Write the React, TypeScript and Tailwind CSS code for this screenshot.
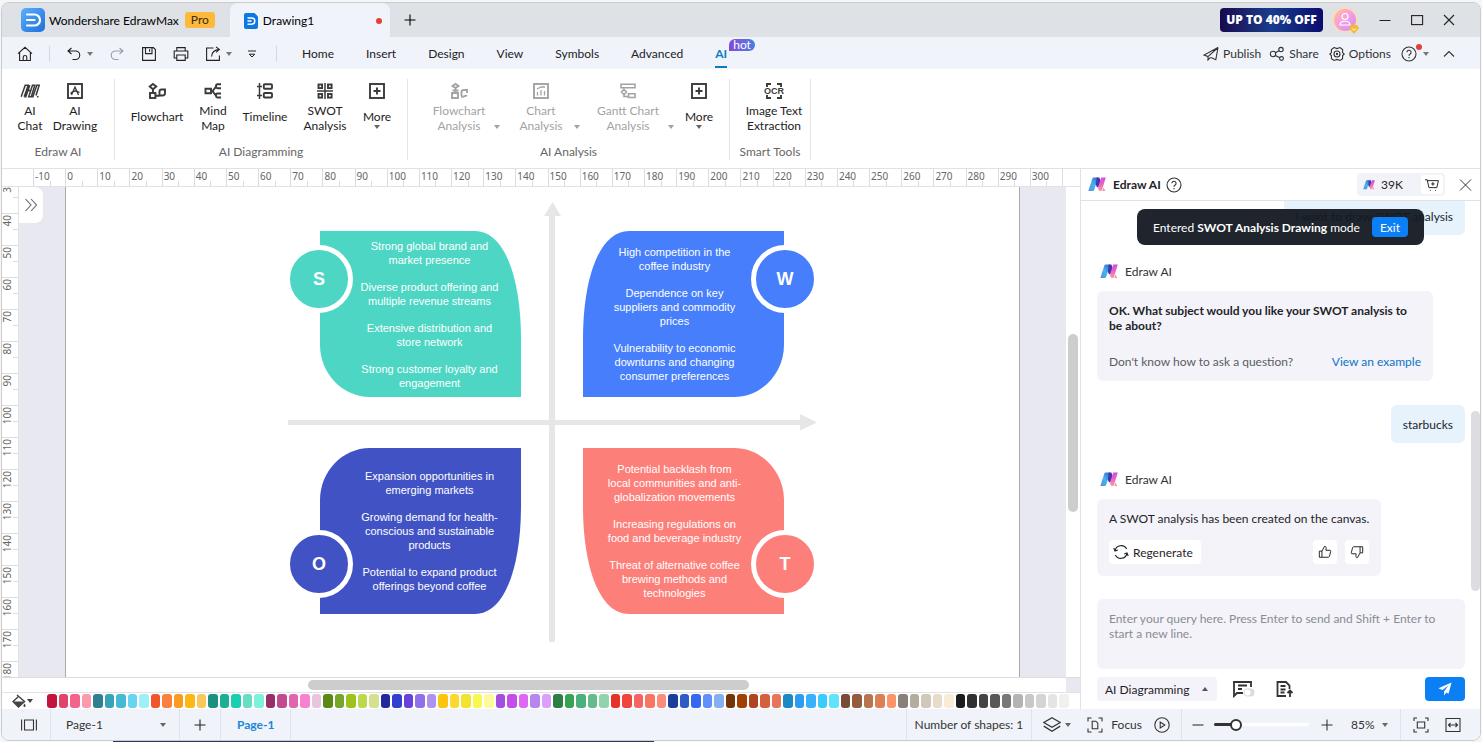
import { useState } from "react";
import type { ReactNode } from "react";
import clsx from "clsx";

interface IconProps {
  size?: string;
  stroke?: number;
  className?: string;
  children: ReactNode;
}

function Icon({ size = "w-4 h-4", stroke = 1.1, className, children }: IconProps) {
  return (
    <svg viewBox="0 0 16 16" className={clsx("shrink-0", size, className)} fill="none" stroke="currentColor" strokeWidth={stroke} aria-hidden="true">
      {children}
    </svg>
  );
}

function Caret({ up, className }: { up?: boolean; className?: string }) {
  return (
    <svg viewBox="0 0 6 4" className={clsx("w-[6px] h-[4px] shrink-0", className)} fill="currentColor" aria-hidden="true">
      <path d={up ? "M0 4L3 0l3 4z" : "M0 0h6L3 4z"} />
    </svg>
  );
}

function EdrawMark({ className }: { className?: string }) {
  return (
    <svg viewBox="0 0 18 15" className={clsx("shrink-0", className)} aria-hidden="true">
      <defs>
        <linearGradient id="markBlue" x1="0" y1="1" x2="1" y2="0">
          <stop offset="0" stopColor="#5a8fe4" />
          <stop offset=".5" stopColor="#45b4ee" />
          <stop offset="1" stopColor="#3a5ec8" />
        </linearGradient>
        <linearGradient id="markPink" x1="0" y1="0" x2="0" y2="1">
          <stop offset="0" stopColor="#d050e0" />
          <stop offset=".5" stopColor="#f062bc" />
          <stop offset="1" stopColor="#fb9aa8" />
        </linearGradient>
      </defs>
      <path d="M4.300 1.500Q4.700.500 5.700.500H10L6.200 13q-.4 1-1.400 1H.3z" fill="url(#markBlue)" />
      <path d="M8.800.500h2.600l1.600 4.500-3 5.500q-1.500 0-2.200-3z" fill="#4136b4" />
      <path d="M13.200.500h4.600l-2.600 8.500-1.200 4q-.3 1-1.300 1h-1.400q-1.600-2-1.100-4z" fill="url(#markPink)" />
      <path d="M15.600 10.500l1.600 3.500h-2.800z" fill="#f78bb0" />
    </svg>
  );
}

function AppLogo({ className }: { className?: string }) {
  return (
    <svg viewBox="0 0 24 24" className={clsx("shrink-0", className)} aria-hidden="true">
      <defs>
        <linearGradient id="appLogo" x1="0" y1="0" x2="1" y2="1">
          <stop offset="0" stopColor="#5cb0fc" />
          <stop offset="1" stopColor="#1c6fdc" />
        </linearGradient>
      </defs>
      <rect width="24" height="24" rx="5" fill="url(#appLogo)" />
      <path d="M6 6.500h7.500a5.500 5.500 0 0 1 0 11H6M6 12h7.500" fill="none" stroke="#fff" strokeWidth="2.200" strokeLinecap="round" />
    </svg>
  );
}

function FileLogo() {
  return (
    <svg viewBox="0 0 14 16" className="w-[14px] h-4 shrink-0" aria-hidden="true">
      <path d="M2 0h8.500L14 3.500V14a2 2 0 0 1-2 2H2a2 2 0 0 1-2-2V2a2 2 0 0 1 2-2z" fill="#0b78e3" />
      <path d="M3.500 5h4.200a3 3 0 0 1 0 6.200H3.500M3.500 8.100h4" fill="none" stroke="#fff" strokeWidth="1.500" />
    </svg>
  );
}

const icons = {
  home: <path d="M1 7.700L8 1.300l7 6.400M2.600 6.500v8h10.800v-8M6.200 14.500v-3.200a1.800 1.800 0 0 1 3.600 0v3.200" />,
  undo: <path d="M5.500 2L2 5l3.500 3M2 5h7.500a4.200 4.200 0 0 1 0 8.500H6.500" />,
  redo: <path d="M10.500 2L14 5l-3.500 3M14 5H6.500a4.200 4.200 0 0 0 0 8.500h3" />,
  save: <path d="M1.600 1.600h10.800l2 2v10.800H1.600zM4.500 1.600v6h6.500v-6M8.600 3.200v2.600" />,
  print: <path d="M3.800 5V1.600h8.400V5M3.800 12H1.200V5h13.600v7h-2.600M3.800 9h8.400v5.400H3.800z" />,
  exportFile: <path d="M8.500 2H1.600v12.400h12.800V9.500M11 .8l3.400 2.800L11 6.400M14.400 3.600C10 3.800 6.800 6 6.600 10.500" />,
  overflow: <path d="M4 5h8M5.200 8.200h5.600L8 11z" strokeWidth="1" />,
  publish: <path d="M15 1.500L1 9l4 1.600L15 1.500zM15 1.500l-2.200 12.300L8 11.500M5 10.600V14l2.600-2.700" />,
  share: (
    <>
      <circle cx="4" cy="8" r="2.700" />
      <circle cx="12" cy="3.600" r="2.200" />
      <circle cx="12.500" cy="12.500" r="1.900" />
      <path d="M6.400 6.700L10 4.700M6.300 9.400l4.600 2.400" />
    </>
  ),
  gear: (
    <>
      <path d="M5 1.600L8 2.600l3-1 2.600 2v3L15.200 8l-1.600 1.600v3L11 14.400l-3-1-3 1-2.600-1.800v-3L.8 8l1.600-1.400v-3z" />
      <circle cx="8" cy="8" r="3" />
      <circle cx="8" cy="8" r=".6" />
    </>
  ),
  help: (
    <>
      <circle cx="8" cy="8" r="7" />
      <path d="M5.900 6.300a2.100 2.100 0 1 1 3.100 1.900c-.7.400-1 .8-1 1.500M8 11v1.200" />
    </>
  ),
  chevronUp: <path d="M3 10.500l5-5 5 5" />,
  close: <path d="M3 2.500l11 11M14 2.500l-11 11" />,
  plus: <path d="M8 2.500v11M2.500 8h11" />,
  chat: (
    <path d="M-.8 13.800L3.200 2.200h3L2.200 13.800M2.200 13.800h1.600L7.800 2.200M3.800 13.800L6 7.500h3.500M9.300 13.800h-2.600L10.500 2.200h2.300zM9.300 13.800h1.600L14.800 2.200h2.400L14 12.500M15 13.800h1.500" strokeWidth="1.500" />
  ),
  drawing: (
    <>
      <rect x="1" y="1" width="14" height="14" />
      <path d="M4.500 12L8 4l3.500 8M3.500 10.500c3-3.500 6-3 9-1" strokeWidth="1.300" />
    </>
  ),
  flowchart: (
    <>
      <path d="M4 .900l3.300 2.700L4 6.300.7 3.600zM4 6.300V10M6.500 12.800h3.800" />
      <rect x="1" y="10" width="5.400" height="5" />
      <path d="M10.500 12.500V8.500q0-2 2-2h3.500v3.500q0 2.500-2.500 2.500z" />
    </>
  ),
  flowchartMuted: (
    <path d="M1.500 3L4.500.900l3 2.100-3 2.100zM4.500 5v5M1 10h6v5H1zM1.500 7.500h6M10.500 13.500V9q0-2 2.500-2h3v3M10.500 13.500c2 1.500 3.500-2 5.500-.5" />
  ),
  mindMap: (
    <path d="M.5 5.800h5.500v4.500H.5zM6 8.200h1.500L11 3.500M7.500 8.200L11 12.700M16 1.200h-3.500q-1.500 0-1.500 1.500v1q0 1.500 1.500 1.500H16M16 10.500h-3.500q-1.500 0-1.500 1.500v1q0 1.500 1.500 1.500H16" />
  ),
  timeline: (
    <>
      <path d="M2.500 0v16M0 3.500h5M0 12.500h5" strokeWidth="1.500" />
      <rect x="6.800" y="1.300" width="8.200" height="4.500" rx="1" />
      <rect x="6.800" y="10" width="8.200" height="4.500" rx="1" />
    </>
  ),
  swot: (
    <>
      <path d="M8 0v16M0 8h16" strokeWidth="1.500" />
      <rect x="1.500" y="1.500" width="3.600" height="3.600" />
      <rect x="11" y="1.500" width="3.600" height="3.600" />
      <rect x="1.500" y="11" width="3.600" height="3.600" />
      <rect x="11" y="11" width="3.600" height="3.600" />
    </>
  ),
  more: (
    <>
      <rect x="1" y="1" width="14" height="14" />
      <path d="M8 4.500v7M4.500 8h7" />
    </>
  ),
  chart: (
    <>
      <rect x="1" y="1" width="14" height="14" />
      <path d="M4.500 12.500V9M8 12.500V7M11.500 12.500V8M4 6l4-2 4 0" strokeWidth="1.300" />
    </>
  ),
  gantt: <path d="M1 1.200h14v3.600H1zM8.500 10.800h6.500v3.700H8.500zM4 6.500l2.500 2.500L4 11.500 1.500 9zM4 11.500v2h4" strokeWidth="1.600" />,
  ocr: (
    <>
      <path d="M1 4V1h4M11 1h4v3M15 12v3h-4M5 15H1v-3" />
      <text x="8" y="11.200" textAnchor="middle" fontSize="9" fontWeight="700" fill="currentColor" stroke="none" fontFamily="Liberation Sans, sans-serif">OCR</text>
    </>
  ),
  cart: (
    <>
      <path d="M.5 2h2l2 9h9l1.800-8H3M6 14.200h.1M12 14.200h.1" strokeLinecap="round" />
      <path d="M9 4.800v4M7 6.800h4" />
    </>
  ),
  refresh: <path d="M2 6.500A6.300 6.300 0 0 1 13.700 5M14 9.500A6.300 6.300 0 0 1 2.300 11M.8 4l1.200 3 2.800-1M15.200 12L14 9l-2.800 1" />,
  thumbUp: <path d="M1.500 7h3v7h-3zM4.500 7L7.500 1.500c2 0 2 1.500 1.500 4.500h5l.5 1.200-1.500 6-1 .8H4.500" />,
  thumbDown: <path d="M14.500 9h-3V2h3zM11.500 9l-3 5.500c-2 0-2-1.500-1.500-4.500H2l-.5-1.200 1.500-6 1-.8h7.500" />,
  focus: <path d="M4.500 1H1v3.500M11.500 1H15v3.500M4.500 15H1v-3.500M11.500 15H15v-3.500M5.200 4.200h3.600l2 2v5.600H5.200z" />,
  play: (
    <>
      <circle cx="8" cy="8" r="7.200" />
      <path d="M6.200 5v6l4.600-3z" />
    </>
  ),
  layers: <path d="M8 1.500l7.300 4.300L8 10.100.7 5.800zM.7 9L8 13.500 15.300 9" />,
  fit: <path d="M4 1H1v3M12 1h3v3M4 15H1v-3M12 15h3v-3M4.300 5h7.400v6H4.300z" />,
  fitWidth: <path d="M1 1.500h14v13H1zM3.500 8h9M5.500 6l-2 2 2 2M10.500 6l2 2-2 2" />,
  pages: <path d="M.6 2.500v11M15.400 2.500v11M3.500 3h9v10h-9z" />,
};

const palette = [
  "#c4143c", "#e04468", "#f2648c", "#fb9aac",
  "#2d7f91", "#35a3b8", "#45bbd3", "#66d5ef", "#9df0f8",
  "#f0562a", "#fb8040", "#fb9a20", "#fcb714", "#f8c85c",
  "#199080", "#1cae94", "#18cfb0", "#6adcc4", "#7df2da",
  "#982d68", "#c34a90", "#e263ae", "#f880d0", "#e8c4de",
  "#5a8a14", "#76a62a", "#9cc21c", "#bcd84c", "#d4e290",
  "#232a9c", "#323fd0", "#6840dc", "#9070e8", "#ae92ec",
  "#fcc40c", "#fcd830", "#f0e430", "#f8f850", "#fdfa9c",
  "#a050dc", "#c44ce8", "#dc68f4", "#b884f0", "#dca0fa",
  "#2c7e44", "#34a450", "#4cb07c", "#64bc8c", "#90d4ac",
  "#e43228", "#f0443c", "#f46464", "#fa7464", "#fc8c7c",
  "#1c3e98", "#2c5cc4", "#3468f0", "#6090fa", "#84b0f0",
  "#743408", "#a04004", "#b04420", "#d4603c", "#e8745c",
  "#1c88c4", "#2c9cf0", "#38b0fc", "#38ccfc", "#60e4fc",
  "#784c38", "#945c3c", "#b87450", "#dc8054", "#fc9468",
  "#888078", "#b4ac9c", "#d0c8b8", "#e8dcc8", "#f8ecd8",
  "#181c1c", "#303030", "#444444", "#585858", "#787878",
  "#b4b4b4", "#c8c8c8", "#d4d4d4", "#e4e4e4", "#f0f0f0",
];

function TitleBar() {
  return (
    <header className="flex h-[34px] shrink-0 items-center bg-[#dee1e5] text-black">
      <AppLogo className="ml-[19px] w-6 h-6" />
      <span className="ml-1 pt-px">Wondershare EdrawMax</span>
      <span className="ml-[6px] flex h-4 w-[30px] items-center justify-center rounded-[3px] bg-[#fdb93c] text-[#3a2a10]">Pro</span>
      <div className="ml-[15px] flex w-40 items-center self-stretch rounded-t-lg bg-[#f0f3fa] pl-[14px] pr-2 pt-px">
        <FileLogo />
        <span className="ml-[5px] flex-1">Drawing1</span>
        <span className="h-[6px] w-[6px] rounded-full bg-[#e2403c]" />
      </div>
      <button aria-label="New tab" className="ml-3 flex h-4 w-4 items-center justify-center">
        <Icon>{icons.plus}</Icon>
      </button>
      <div className="ml-auto flex items-center pr-[23px]">
        <button className="h-6 w-[103px] rounded bg-linear-to-r from-[#16094f] via-[#1b3c8c] to-[#0b0a6e] font-['Open_Sans',sans-serif] text-[12px] font-extrabold whitespace-nowrap text-white">
          UP TO 40% OFF
        </button>
        <button aria-label="Account" className="ml-2 h-7 w-7">
          <svg viewBox="0 0 28 28" className="h-7 w-7">
            <defs>
              <linearGradient id="avatar" x1="0" y1="0" x2="1" y2="1">
                <stop offset="0" stopColor="#ffc08a" />
                <stop offset=".45" stopColor="#f7a0e0" />
                <stop offset="1" stopColor="#c98cf5" />
              </linearGradient>
            </defs>
            <circle cx="14" cy="14" r="13" fill="#f8ddb8" />
            <circle cx="14" cy="14" r="11" fill="url(#avatar)" />
            <circle cx="14" cy="10.500" r="3" fill="none" stroke="#fff" strokeWidth="1.200" />
            <path d="M9 19c0-5 10-5 10 0z" fill="none" stroke="#fff" strokeWidth="1.200" />
            <path d="M20 19h6l2 3-5 6-5-6z" fill="#f5b82e" />
            <path d="M21 22.300l2 2.200 2-2.200" fill="none" stroke="#fff" />
          </svg>
        </button>
        <div className="ml-[18px] flex gap-4 text-[#222]">
          <button aria-label="Minimize"><Icon><path d="M2.500 8.500h11" /></Icon></button>
          <button aria-label="Maximize"><Icon><rect x="2.600" y="3.600" width="11" height="9" /></Icon></button>
          <button aria-label="Close"><Icon><path d="M3 3l10 10M13 3L3 13" /></Icon></button>
        </div>
      </div>
    </header>
  );
}

const menus = ["Home", "Insert", "Design", "View", "Symbols", "Advanced"];

function MenuBar() {
  return (
    <div className="flex h-8 shrink-0 items-center bg-[#f0f3fa] pt-px">
      <button aria-label="Home" className="ml-[15px]"><Icon>{icons.home}</Icon></button>
      <span className="ml-4 h-4 w-px bg-[#d3d7de]" />
      <button aria-label="Undo" className="ml-4"><Icon>{icons.undo}</Icon></button>
      <button aria-label="Undo history" className="ml-[5px] text-[#777]"><Caret /></button>
      <button aria-label="Redo" className="ml-4 text-[#9a9ea5]"><Icon>{icons.redo}</Icon></button>
      <button aria-label="Save" className="ml-4"><Icon>{icons.save}</Icon></button>
      <button aria-label="Print" className="ml-4"><Icon>{icons.print}</Icon></button>
      <button aria-label="Export" className="ml-4"><Icon>{icons.exportFile}</Icon></button>
      <button aria-label="Export options" className="ml-[5px] text-[#777]"><Caret /></button>
      <button aria-label="More commands" className="ml-3"><Icon>{icons.overflow}</Icon></button>
      <span className="ml-4 h-4 w-px bg-[#d3d7de]" />
      <nav className="ml-[25px] flex items-center gap-8 self-stretch">
        {menus.map((m) => (
          <button key={m}>{m}</button>
        ))}
        <button className="relative flex items-center self-stretch font-bold text-[#0b7bc4]">
          AI
          <span className="absolute inset-x-0 bottom-px h-[2px] bg-[#0b7bc4]" />
          <span className="absolute bottom-[18px] left-[14px] flex h-3 items-center rounded-full rounded-bl-none bg-linear-to-r from-[#8348d8] to-[#3f7fe0] px-1 font-normal text-white">hot</span>
        </button>
      </nav>
      <div className="ml-auto flex items-center pr-[23px] text-[#333]">
        <button className="flex items-center gap-1"><Icon>{icons.publish}</Icon>Publish</button>
        <button className="ml-2 flex items-center gap-1"><Icon>{icons.share}</Icon>Share</button>
        <button className="ml-[10px] flex items-center gap-1"><Icon>{icons.gear}</Icon>Options</button>
        <button aria-label="Help" className="relative ml-[10px]">
          <Icon>{icons.help}</Icon>
          <span className="absolute -top-[2px] left-[15px] h-[6px] w-[6px] rounded-full bg-[#e2403c]" />
        </button>
        <button aria-label="Help options" className="ml-[6px] text-[#777]"><Caret /></button>
        <button aria-label="Collapse ribbon" className="ml-3"><Icon>{icons.chevronUp}</Icon></button>
      </div>
    </div>
  );
}

interface ToolProps {
  icon: ReactNode;
  lines: string[];
  width: string;
  caret?: boolean;
  muted?: boolean;
}

function Tool({ icon, lines, width, caret, muted }: ToolProps) {
  return (
    <div className={clsx("flex items-end", muted ? "text-[#a3a3a3]" : "text-[#222]")}>
      <button className={clsx("flex h-[52px] flex-col items-center leading-[15px]", width)}>
        <Icon stroke={1.900} className={clsx("overflow-visible", !muted && "text-[#3a3a3a]")}>{icon}</Icon>
        <span className={clsx("flex flex-col items-center whitespace-nowrap", lines.length === 1 ? "mt-[10px]" : "mt-1")}>
          {lines.map((l) => (
            <span key={l}>{l}</span>
          ))}
        </span>
        {caret && !muted && <Caret className="mt-px text-[#666]" />}
      </button>
      {caret && muted && (
        <button aria-label={lines.join(" ") + " options"} className="mb-[6px] flex"><Caret /></button>
      )}
    </div>
  );
}

function ToolGroup({ label, className, children }: { label: string; className: string; children: ReactNode }) {
  return (
    <section aria-label={label} className={clsx("flex h-[81px] flex-col border-r border-[#e3e3e6] pt-1", className)}>
      <div className="flex">{children}</div>
      <span className="mt-[9px] text-center leading-[15px] text-[#666]">{label}</span>
    </section>
  );
}

function Ribbon() {
  return (
    <div className="flex h-[99px] shrink-0 items-start bg-white pt-[10px]">
      <ToolGroup label="Edraw AI" className="w-[113px] [&>div]:pl-[6px]">
        <Tool icon={icons.chat} lines={["AI", "Chat"]} width="w-[44px]" />
        <Tool icon={icons.drawing} lines={["AI", "Drawing"]} width="w-[46px]" />
      </ToolGroup>
      <ToolGroup label="AI Diagramming" className="w-[293px] [&>div]:pl-[10px]">
        <Tool icon={icons.flowchart} lines={["Flowchart"]} width="w-16" />
        <Tool icon={icons.mindMap} lines={["Mind", "Map"]} width="w-12" />
        <Tool icon={icons.timeline} lines={["Timeline"]} width="w-14" />
        <Tool icon={icons.swot} lines={["SWOT", "Analysis"]} width="w-16" />
        <Tool icon={icons.more} lines={["More"]} width="w-10" caret />
      </ToolGroup>
      <ToolGroup label="AI Analysis" className="w-[322px] [&>div]:gap-2 [&>div]:pl-4">
        <Tool icon={icons.flowchartMuted} lines={["Flowchart", "Analysis"]} width="w-[70px]" caret muted />
        <Tool icon={icons.chart} lines={["Chart", "Analysis"]} width="w-[66px]" caret muted />
        <Tool icon={icons.gantt} lines={["Gantt Chart", "Analysis"]} width="w-20" caret muted />
        <Tool icon={icons.more} lines={["More"]} width="w-[34px]" caret />
      </ToolGroup>
      <ToolGroup label="Smart Tools" className="w-[81px] [&>div]:pl-2">
        <Tool icon={icons.ocr} lines={["Image Text", "Extraction"]} width="w-[72px]" />
      </ToolGroup>
    </div>
  );
}

const hMarks = Array.from({ length: 32 }, (_, i) => (i - 1) * 10);
const vMarks = Array.from({ length: 15 }, (_, i) => (i + 4) * 10);

function HorizontalRuler() {
  return (
    <div className="flex h-[19px] shrink-0 overflow-hidden border-y border-[#e2e2e6] bg-white pl-[31px] pr-[14px] font-['Noto_Sans',sans-serif] text-[10px] leading-[15px] text-[#666]">
      {hMarks.map((n) => (
        <div key={n} className="flex flex-1 border-l border-[#dcdce0]">
          <span className="w-1/2 pl-px whitespace-nowrap">{n}</span>
          <span className="h-[5px] w-1/2 self-end border-l border-[#dcdce0]" />
        </div>
      ))}
      <div className="w-1 border-l border-[#dcdce0]" />
    </div>
  );
}

function VerticalRuler() {
  return (
    <div className="flex w-[17px] shrink-0 flex-col overflow-hidden border-r border-[#e2e2e6] bg-white font-['Noto_Sans',sans-serif] text-[10px] leading-[10px] text-[#666]">
      <div className="flex h-[26px] shrink-0 items-start justify-between">
        <span className="rotate-180 [writing-mode:vertical-rl]">3</span>
        <span className="h-4 w-[5px] self-end border-t border-[#dcdce0]" />
      </div>
      {vMarks.map((n) => (
        <div key={n} className="flex h-8 shrink-0 items-start justify-between border-t border-[#dcdce0]">
          <span className="pb-px rotate-180 whitespace-nowrap [writing-mode:vertical-rl]">{n}</span>
          <span className="h-4 w-[5px] self-end border-t border-[#dcdce0]" />
        </div>
      ))}
    </div>
  );
}

interface Quadrant {
  letter: string;
  fill: string;
  box: string;
  badge: string;
  flip: string;
  points: string[][];
}

const quadrants: Quadrant[] = [
  {
    letter: "S",
    fill: "#4ed6c4",
    box: "left-[254px] top-[44px] pl-[18px]",
    badge: "left-[219px] top-[58px] bg-[#4ed6c4]",
    flip: "",
    points: [
      ["Strong global brand and", "market presence"],
      ["Diverse product offering and", "multiple revenue streams"],
      ["Extensive distribution and", "store network"],
      ["Strong customer loyalty and", "engagement"],
    ],
  },
  {
    letter: "W",
    fill: "#467efc",
    box: "left-[517px] top-[44px] pr-[18px]",
    badge: "left-[685px] top-[58px] bg-[#467efc]",
    flip: "-scale-x-100",
    points: [
      ["High competition in the", "coffee industry"],
      ["Dependence on key", "suppliers and commodity", "prices"],
      ["Vulnerability to economic", "downturns and changing", "consumer preferences"],
    ],
  },
  {
    letter: "O",
    fill: "#4153c4",
    box: "left-[254px] top-[261px] pl-[18px]",
    badge: "left-[219px] top-[343px] bg-[#4153c4]",
    flip: "-scale-y-100",
    points: [
      ["Expansion opportunities in", "emerging markets"],
      ["Growing demand for health-", "conscious and sustainable", "products"],
      ["Potential to expand product", "offerings beyond coffee"],
    ],
  },
  {
    letter: "T",
    fill: "#fd7f7a",
    box: "left-[517px] top-[261px] pr-[18px]",
    badge: "left-[685px] top-[343px] bg-[#fd7f7a]",
    flip: "-scale-100",
    points: [
      ["Potential backlash from", "local communities and anti-", "globalization movements"],
      ["Increasing regulations on", "food and beverage industry"],
      ["Threat of alternative coffee", "brewing methods and", "technologies"],
    ],
  },
];

function SwotDiagram() {
  return (
    <div className="font-['Liberation_Sans',Arial,sans-serif] text-white">
      <svg className="absolute inset-0 h-full w-full" fill="#e6e6e6" aria-hidden="true">
        <path d="M483 455V29h-5l8.500-14L495 29h-6v426z" />
        <path d="M222 233h512v-6l17 8.500-17 8V238H222z" />
      </svg>
      {quadrants.map((q) => (
        <div key={q.letter}>
          <div className={clsx("absolute flex h-[166px] w-[201px] flex-col items-center justify-center gap-[13px] text-center text-[11px] leading-[14px]", q.box)}>
            <svg viewBox="0 0 201 166" className={clsx("absolute inset-0 h-full w-full", q.flip)} aria-hidden="true">
              <path d="M0 0h155c30 0 46 48 46 108v58H50c-28 0-50-24-50-52z" fill={q.fill} />
            </svg>
            {q.points.map((lines) => (
              <p key={lines[0]} className="relative flex flex-col whitespace-nowrap">
                {lines.map((l) => (
                  <span key={l}>{l}</span>
                ))}
              </p>
            ))}
          </div>
          <div className={clsx("absolute flex h-[68px] w-[68px] items-center justify-center rounded-full border-[5px] border-white text-[18px] font-bold", q.badge)}>
            {q.letter}
          </div>
        </div>
      ))}
    </div>
  );
}

function Workspace() {
  return (
    <main className="flex min-w-0 flex-1 flex-col bg-white">
      <HorizontalRuler />
      <div className="flex min-h-0 flex-1">
        <VerticalRuler />
        <div className="relative flex min-w-0 flex-1 bg-[#e8e8f1]">
          <button aria-label="Expand symbol library" className="absolute top-0 left-0 flex h-9 w-6 items-center justify-center rounded-r-lg bg-white text-[#666]">
            <Icon><path d="M2.500 2l5.500 6-5.500 6M8 2l5.500 6L8 14" /></Icon>
          </button>
          <div className="relative mx-[46px] flex-1 overflow-hidden border-x border-[#a8a8ae] bg-white">
            <SwotDiagram />
          </div>
        </div>
        <div className="flex w-[14px] shrink-0 flex-col items-center bg-white pt-[147px]">
          <div className="h-[178px] w-[10px] rounded-full bg-[#cdcdcd]" />
        </div>
      </div>
      <div className="flex h-[15px] shrink-0 items-center border-t border-[#dcdce0] pl-[306px]">
        <div className="h-[10px] w-[441px] rounded-full bg-[#cdcdcd]" />
        <div className="ml-auto w-[14px] self-stretch bg-[#e8e8f1]" />
      </div>
      <div className="flex h-[17px] shrink-0 items-center border-t border-[#e2e2e6] pr-3 pl-[10px]">
        <button aria-label="Fill color" className="flex w-[35px] items-center gap-px text-[#444]">
          <svg viewBox="0 0 14 14" className="h-[14px] w-[14px]" aria-hidden="true">
            <path d="M5 1l7.500 6.500L6.500 13 1 7.500 6 3" fill="none" stroke="currentColor" strokeWidth="1.500" />
            <path d="M1 7.500h11L6.500 13z" fill="currentColor" />
            <path d="M12.500 9.500c1.500 2 1.500 3.500 0 3.500s-1.500-1.500 0-3.500z" fill="currentColor" />
          </svg>
          <Caret />
        </button>
        <div className="flex flex-1 gap-[2px]">
          {palette.map((c, i) => (
            <button key={i} aria-label={c} className="h-[14px] flex-1 rounded-[3px]" style={{ backgroundColor: c }} />
          ))}
        </div>
      </div>
    </main>
  );
}

function Speaker() {
  return (
    <div className="mt-7 flex h-4 items-center pl-[3px]">
      <EdrawMark className="h-[15px] w-[18px]" />
      <span className="ml-[7px] text-[#333]">Edraw AI</span>
    </div>
  );
}

function AiPanel() {
  const [query, setQuery] = useState("");

  return (
    <aside className="flex w-[400px] shrink-0 flex-col border-t border-l border-[#e2e2e6] bg-white leading-[15px] text-[#1f2328]">
      <div className="flex h-8 shrink-0 items-center border-b border-[#e2e2e6] pr-[7px] pl-[7px]">
        <EdrawMark className="h-[15px] w-[18px]" />
        <h2 className="ml-[7px] font-bold">Edraw AI</h2>
        <button aria-label="About Edraw AI" className="ml-[5px] text-[#333]"><Icon>{icons.help}</Icon></button>
        <div className="ml-auto flex h-[23px] w-[88px] items-center rounded bg-[#f2f3f8] p-[2px]">
          <EdrawMark className="ml-1 h-[10px] w-3" />
          <span className="ml-[6px] flex-1">39K</span>
          <button aria-label="Buy tokens" className="flex h-[19px] w-[22px] items-center justify-center rounded-[3px] bg-white">
            <Icon size="w-[14px] h-[14px]">{icons.cart}</Icon>
          </button>
        </div>
        <button aria-label="Close panel" className="ml-[12px] text-[#333]"><Icon stroke={1}>{icons.close}</Icon></button>
      </div>

      <div className="relative flex min-h-0 flex-1">
        <div className="min-w-0 flex-1 overflow-hidden pr-[6px] pl-4">
          <div className="-mt-1 ml-auto flex h-[38px] w-fit items-center rounded-md bg-[#e6f3fd] px-3">I want to draw SWOT analysis</div>
          <Speaker />
          <div className="mt-3 w-[336px] rounded-md bg-[#f3f3f9] p-3">
            <p className="font-bold">OK. What subject would you like your SWOT analysis to be about?</p>
            <div className="mt-[21px] flex justify-between">
              <span className="text-[#5a5d66]">Don't know how to ask a question?</span>
              <a href="#example" className="text-[#0b74c9]">View an example</a>
            </div>
          </div>
          <div className="mt-6 ml-auto flex h-[38px] w-fit items-center rounded-md bg-[#e6f3fd] px-3">starbucks</div>
          <Speaker />
          <div className="mt-3 w-fit rounded-md bg-[#f3f3f9] p-3">
            <p>A SWOT analysis has been created on the canvas.</p>
            <div className="mt-[14px] flex gap-2">
              <button className="mr-auto flex h-6 items-center gap-1 rounded bg-white px-1 pr-2"><Icon>{icons.refresh}</Icon>Regenerate</button>
              <button aria-label="Good response" className="flex h-6 w-6 items-center justify-center rounded bg-white"><Icon size="w-[14px] h-[14px]">{icons.thumbUp}</Icon></button>
              <button aria-label="Bad response" className="flex h-6 w-6 items-center justify-center rounded bg-white"><Icon size="w-[14px] h-[14px]">{icons.thumbDown}</Icon></button>
            </div>
          </div>
        </div>
        <div className="w-[9px] shrink-0 pt-[210px]">
          <div className="h-[180px] rounded-full bg-[#dcdce2]" />
        </div>
        <div className="absolute inset-x-0 top-2 flex justify-center">
          <div role="status" className="flex h-9 items-center rounded-lg bg-[#141922]/95 px-4 whitespace-nowrap text-white">
            <span>Entered <b>SWOT Analysis Drawing</b> mode</span>
            <button className="ml-3 h-5 rounded bg-[#0b80f5] px-2">Exit</button>
          </div>
        </div>
      </div>

      <div className="shrink-0 pr-[15px] pb-2 pl-4">
        <textarea
          aria-label="Query"
          value={query}
          onChange={(e) => setQuery(e.target.value)}
          placeholder="Enter your query here. Press Enter to send and Shift + Enter to start a new line."
          className="block h-[70px] w-full resize-none rounded-md bg-[#f3f3f9] p-3 outline-none placeholder:text-[#8a8c94]"
        />
        <div className="mt-2 flex h-6 items-center">
          <label className="relative flex h-6 w-[120px] items-center rounded bg-[#f3f3f9]">
            <select aria-label="Mode" className="h-6 w-full appearance-none bg-transparent pl-2 outline-none">
              <option>AI Diagramming</option>
            </select>
            <Caret up className="pointer-events-none absolute right-[9px] text-[#555]" />
          </label>
          <button aria-label="Context" className="ml-4">
            <svg viewBox="0 0 22 18" className="h-[18px] w-[22px]" fill="none" stroke="#333" strokeWidth="1.800" aria-hidden="true">
              <path d="M18 7V2H1v14l3-3h6M5 5.500h9M5 9h4" />
              <rect x="10.500" y="8.500" width="11" height="8" rx="4" fill="#dcdce2" stroke="none" />
              <circle cx="14.500" cy="12.500" r="3" fill="#fff" stroke="none" />
            </svg>
          </button>
          <button aria-label="Upload file" className="ml-[21px]">
            <svg viewBox="0 0 18 18" className="h-[18px] w-[18px]" fill="none" stroke="#333" strokeWidth="1.800" aria-hidden="true">
              <path d="M10 16H1.500V2H10l3.500 3.500V9M4.500 6h5M4.500 9.500h5M4.500 12.500h4M14 17v-6M11.500 13l2.500-2.500 2.500 2.500" />
            </svg>
          </button>
          <button aria-label="Send" className="ml-auto flex h-6 w-10 items-center justify-center rounded bg-[#0b80f5]">
            <svg viewBox="0 0 16 16" className="h-[14px] w-[14px]" fill="#fff" aria-hidden="true">
              <path d="M15.500.500L.5 7l4.500 2.200L12 4 7 10.500v5l2.500-3.500 2.500 1.500z" />
            </svg>
          </button>
        </div>
      </div>
    </aside>
  );
}

function StatusBar() {
  const [zoom, setZoom] = useState(85);

  return (
    <footer className="flex h-[31px] shrink-0 items-center bg-[#f0f3fa] text-[#333]">
      <button aria-label="Page view" className="ml-[18px]"><Icon size="w-[18px] h-4">{icons.pages}</Icon></button>
      <span className="ml-3 h-full w-px bg-[#e0e3ea]" />
      <label className="relative ml-[11px] flex w-[104px] items-center">
        <select aria-label="Page" className="w-full appearance-none bg-transparent pl-1 outline-none">
          <option>Page-1</option>
        </select>
        <Caret className="pointer-events-none absolute right-0 text-[#666]" />
      </label>
      <span className="ml-[13px] h-full w-px bg-[#e0e3ea]" />
      <button aria-label="Add page" className="mx-3 text-[#222]"><Icon>{icons.plus}</Icon></button>
      <span className="h-full w-px bg-[#e0e3ea]" />
      <button className="px-4 font-bold text-[#1a86d9]">Page-1</button>
      <span className="h-full w-px bg-[#e0e3ea]" />
      <div className="ml-auto flex h-full items-center pr-[19px]">
        <span className="h-full w-px bg-[#e0e3ea]" />
        <span className="px-2">Number of shapes: 1</span>
        <span className="h-full w-px bg-[#e0e3ea]" />
        <button aria-label="Layers" className="ml-[11px]"><Icon size="w-[18px] h-[18px]">{icons.layers}</Icon></button>
        <button aria-label="Layer options" className="ml-1 text-[#666]"><Caret /></button>
        <button className="ml-4 flex items-center gap-2"><Icon>{icons.focus}</Icon>Focus</button>
        <button aria-label="Present" className="ml-3"><Icon>{icons.play}</Icon></button>
        <span className="ml-[11px] h-full w-px bg-[#e0e3ea]" />
        <button aria-label="Zoom out" className="ml-2"><Icon><path d="M2.500 8h11" /></Icon></button>
        <input
          type="range"
          aria-label="Zoom"
          min={10}
          max={400}
          value={zoom}
          onChange={(e) => setZoom(Number(e.target.value))}
          className="ml-2 h-[3px] w-[95px] appearance-none rounded bg-[linear-gradient(to_right,#333_20px,#fff_20px)] [&::-webkit-slider-thumb]:h-3 [&::-webkit-slider-thumb]:w-3 [&::-webkit-slider-thumb]:appearance-none [&::-webkit-slider-thumb]:rounded-full [&::-webkit-slider-thumb]:border-2 [&::-webkit-slider-thumb]:border-[#333] [&::-webkit-slider-thumb]:bg-white"
        />
        <button aria-label="Zoom in" className="ml-[10px]"><Icon>{icons.plus}</Icon></button>
        <label className="relative ml-[16px] flex w-[37px] items-center">
          <select aria-label="Zoom level" className="w-full appearance-none bg-transparent outline-none">
            <option>{zoom}%</option>
          </select>
          <Caret className="pointer-events-none absolute right-0 text-[#666]" />
        </label>
        <span className="ml-3 h-full w-px bg-[#e0e3ea]" />
        <button aria-label="Fit page" className="ml-3"><Icon>{icons.fit}</Icon></button>
        <button aria-label="Fit width" className="ml-4"><Icon>{icons.fitWidth}</Icon></button>
      </div>
    </footer>
  );
}

export default function App() {
  return (
    <div className="flex h-screen flex-col bg-[#f6f6f6] px-px pt-[2px] font-['Lato','Noto_Sans',sans-serif] text-[12px] text-[#222]">
      <div className="flex min-h-0 flex-1 flex-col overflow-hidden rounded-lg border border-[#c9ccd1]">
        <TitleBar />
        <MenuBar />
        <Ribbon />
        <div className="flex min-h-0 flex-1">
          <Workspace />
          <AiPanel />
        </div>
        <StatusBar />
      </div>
      <div className="ml-28 h-px w-[541px] shrink-0 bg-[#26395e]" />
    </div>
  );
}
